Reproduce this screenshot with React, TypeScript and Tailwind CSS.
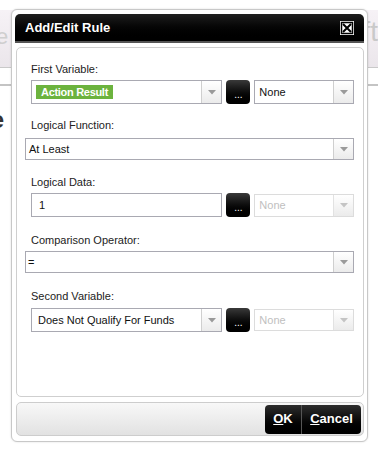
import React from 'react';

const font = { fontFamily: '"Liberation Sans", Arial, sans-serif' };

function Arrow({ disabled }: { disabled?: boolean }) {
  return (
    <div
      className={`w-[20px] shrink-0 flex items-center justify-center border-l bg-gradient-to-b from-white to-[#ebebeb] ${
        disabled ? 'border-[#e2e2e2]' : 'border-[#cfcfcf]'
      }`}
    >
      <svg width="8" height="5" viewBox="0 0 8 5">
        <path d="M0 0 L8 0 L4 4.5 Z" fill={disabled ? '#c4c4c4' : '#9a9a9a'} />
      </svg>
    </div>
  );
}

function Select({
  children,
  className = '',
  disabled
}: {
  children?: React.ReactNode;
  className?: string;
  disabled?: boolean;
}) {
  return (
    <div
      className={`flex border bg-white ${disabled ? 'border-[#dcdcdc]' : 'border-[#a9a9b2]'} ${className}`}
    >
      <div
        className={`flex-1 flex items-center pl-[4px] text-[11px] ${
          disabled ? 'text-[#c0c0c0]' : 'text-[#111]'
        }`}
      >
        {children}
      </div>
      <Arrow disabled={disabled} />
    </div>
  );
}

function DotsButton() {
  return (
    <button className="w-[24px] h-[24px] shrink-0 rounded-[4px] bg-gradient-to-b from-[#3a3a3a] via-[#0d0d0d] to-black flex items-end justify-center pb-[5px] text-white text-[10px] leading-[8px]">
      ...
    </button>
  );
}

function Label({ children, className = '' }: { children: React.ReactNode; className?: string }) {
  return <div className={`ml-[14px] text-[11px] leading-[13px] text-[#222] ${className}`}>{children}</div>;
}

export default function App() {
  return (
    <div className="relative w-[378px] h-[450px] overflow-hidden bg-white" style={font}>
      {/* Page behind the dialog */}
      <div className="pt-[10px]">
        <div className="h-[58px] bg-gradient-to-b from-[#f6f2f6] to-[#ebe6eb] border-b border-[#c9c9c9] flex justify-between items-start">
          <span className="-ml-[42px] mt-[14px] text-[22px] leading-[26px] text-[#cfcfcf]">Save</span>
          <span className="mr-[0px] mt-[6px] text-[28px] leading-[32px] text-[#c9c9c9]">Draft</span>
        </div>
        <div className="mt-[16px] h-[2px] bg-[#c4c4c4]" />
        <div className="-ml-[48px] mt-[20px] text-[24px] leading-[28px] font-bold text-[#333]">Rule</div>
      </div>

      {/* Dialog */}
      <div className="absolute left-[11px] top-[9px] w-[357px] h-[433px] rounded-[6px] border border-[#c8c8c8] bg-white px-[3px] pt-[4px] pb-[4px] flex flex-col shadow-[0_0_2px_rgba(0,0,0,0.15)]">
        <div className="h-[29px] rounded-t-[5px] bg-gradient-to-b from-[#1e1e1e] to-black flex items-center justify-between pl-[10px] pr-[10px] border-b-2 border-[#555]">
          <span className="text-white font-bold text-[13px]">Add/Edit Rule</span>
          <svg width="14" height="14" viewBox="0 0 14 14">
            <rect x="0.5" y="0.5" width="13" height="13" fill="white" stroke="white" />
            <rect x="1.5" y="1.5" width="11" height="11" fill="white" stroke="black" strokeWidth="1.5" />
            <path d="M3 3 L11 11 M11 3 L3 11" stroke="black" strokeWidth="2" />
          </svg>
        </div>

        <div className="mt-[4px] ml-[1px] h-[350px] rounded-[5px] border border-[#cfcfcf] pt-[15px] pr-[9px]">
          <Label>First Variable:</Label>
          <div className="mt-[4px] ml-[14px] flex gap-[4px]">
            <Select className="w-[192px] h-[24px]">
              <span className="h-[14px] bg-[#6cb33e] text-white text-[11px] leading-[14px] px-[5px] font-bold tracking-[-0.3px]">
                Action Result
              </span>
            </Select>
            <DotsButton />
            <Select className="w-[100px] h-[24px]">None</Select>
          </div>

          <Label className="mt-[15px]">Logical Function:</Label>
          <Select className="mt-[6px] ml-[8px] h-[22px]">
            <span className="-ml-[1px]">At Least</span>
          </Select>

          <Label className="mt-[16px]">Logical Data:</Label>
          <div className="mt-[4px] ml-[14px] flex gap-[4px] items-center">
            <div className="w-[192px] h-[24px] border border-[#a9a9b2] flex items-center pl-[7px] text-[11px] text-[#111]">
              1
            </div>
            <DotsButton />
            <Select disabled className="w-[100px] h-[23px]">
              None
            </Select>
          </div>

          <Label className="mt-[17px]">Comparison Operator:</Label>
          <Select className="mt-[4px] ml-[8px] h-[22px]">
            <span className="-ml-[2px]">=</span>
          </Select>

          <Label className="mt-[17px]">Second Variable:</Label>
          <div className="mt-[5px] ml-[14px] flex gap-[4px] items-center">
            <Select className="w-[192px] h-[24px]">
              <span className="ml-[2px]">Does Not Qualify For Funds</span>
            </Select>
            <DotsButton />
            <Select disabled className="w-[100px] h-[22px]">
              None
            </Select>
          </div>
        </div>

        <div className="mt-[5px] ml-[1px] h-[34px] rounded-[5px] border border-[#cdcdcd] bg-gradient-to-b from-[#f8f8f8] to-[#e2e2e2] flex justify-end items-center pr-[2px]">
          <div className="flex h-[29px] rounded-[4px] overflow-hidden bg-gradient-to-b from-[#2e2e2e] to-black text-white font-bold text-[13px]">
            <button className="w-[37px] flex items-center justify-center border-r border-[#555]">
              <span><span className="underline">O</span>K</span>
            </button>
            <button className="w-[59px] flex items-center justify-center">
              <span><span className="underline">C</span>ancel</span>
            </button>
          </div>
        </div>
      </div>
    </div>
  );
}
